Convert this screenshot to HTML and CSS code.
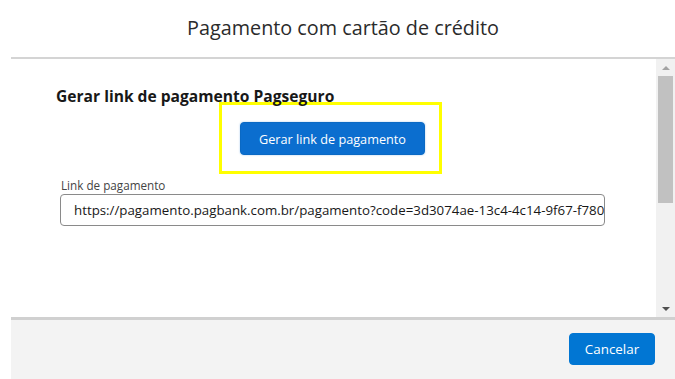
FILE: index.html
```html
<!DOCTYPE html>
<html lang="pt-BR">
<head>
<meta charset="utf-8">
<title>Pagamento com cartão de crédito</title>
<link rel="stylesheet" href="styles.css">
</head>
<body>
<div class="modal">
  <header class="modal-header">
    <h1 class="modal-title">Pagamento com cartão de crédito</h1>
  </header>
  <div class="modal-body">
    <div class="content">
      <h2 class="section-title">Gerar link de pagamento Pagseguro</h2>
      <div class="action-row">
        <div class="highlight">
          <button class="btn btn-brand btn-generate">Gerar link de pagamento</button>
        </div>
      </div>
      <div class="field">
        <label class="field-label">Link de pagamento</label>
        <div class="input">https://pagamento.pagbank.com.br/pagamento?code=3d3074ae-13c4-4c14-9f67-f780</div>
      </div>
    </div>
    <div class="scrollbar">
      <div class="arrow arrow-up"></div>
      <div class="track"><div class="thumb"></div></div>
      <div class="arrow arrow-down"></div>
    </div>
  </div>
  <footer class="modal-footer">
    <button class="btn btn-brand btn-cancel">Cancelar</button>
  </footer>
</div>
</body>
</html>
```

FILE: styles.css
```css
* { box-sizing: border-box; }
html, body { margin: 0; padding: 0; background: #fff; }
body {
  font-family: "Open Sans", "Noto Sans", sans-serif;
  color: #181818;
  width: 675px;
  height: 379px;
  overflow: hidden;
}
.modal {
  margin-left: 11px;
  height: 379px;
  display: flex;
  flex-direction: column;
}
.modal-header {
  height: 59px;
  border-bottom: 2px solid #d4d4d4;
  display: flex;
  align-items: center;
  justify-content: center;
  padding-bottom: 2px;
}
.modal-title {
  margin: 0;
  font-weight: 400;
  font-size: 19.8px;
  color: #2b2b2b;
}
.modal-body {
  height: 258px;
  display: flex;
}
.content {
  flex: 1;
  padding: 27px 0 0 45px;
}
.section-title {
  margin: 0;
  font-size: 15.6px;
  font-weight: 700;
  line-height: 20px;
  color: #181818;
}
.action-row {
  margin-left: 163px;
  margin-top: -4px;
}
.highlight {
  width: 223px;
  height: 72px;
  border: 3px solid #ffff00;
  padding: 17px 0 0 18px;
}
.btn {
  font-family: inherit;
  border: 1px solid #0a69c4;
  background: #0b6ecf;
  color: #fff;
  border-radius: 4px;
  cursor: pointer;
}
.btn-generate {
  width: 185px;
  height: 33px;
  font-size: 12.7px;
  padding: 0;
  box-shadow: 0 0 2px rgba(11, 110, 207, 0.4);
}
.field {
  margin-top: 3px;
  margin-left: 4px;
}
.field-label {
  display: block;
  font-size: 11.7px;
  color: #444;
  line-height: 16px;
  margin-left: 1px;
}
.input {
  margin-top: 1px;
  width: 545px;
  height: 32px;
  border: 1px solid #8a8a8a;
  border-radius: 4px;
  padding: 0 4px 0 13px;
  font-size: 13.3px;
  line-height: 30px;
  color: #181818;
  white-space: nowrap;
  overflow: hidden;
}
.scrollbar {
  width: 19px;
  background: #f1f1f1;
  display: flex;
  flex-direction: column;
  align-items: center;
}
.arrow {
  height: 17px;
  width: 100%;
  display: flex;
  align-items: center;
  justify-content: center;
}
.arrow-up::before {
  content: "";
  border-left: 4px solid transparent;
  border-right: 4px solid transparent;
  border-bottom: 4px solid #a3a3a3;
}
.arrow-down::before {
  content: "";
  border-left: 4px solid transparent;
  border-right: 4px solid transparent;
  border-top: 4px solid #505050;
}
.track {
  flex: 1;
  width: 100%;
  padding: 0 2px;
}
.thumb {
  height: 127px;
  background: #c1c1c1;
}
.modal-footer {
  flex: 1;
  background: #f3f3f3;
  border-top: 3px solid #d0d0d0;
  display: flex;
  justify-content: flex-end;
  align-items: flex-start;
  padding: 13px 20px 0 0;
}
.btn-cancel {
  width: 86px;
  height: 32px;
  background: #0176d3;
  border-color: #0176d3;
  font-size: 13.4px;
}
```
